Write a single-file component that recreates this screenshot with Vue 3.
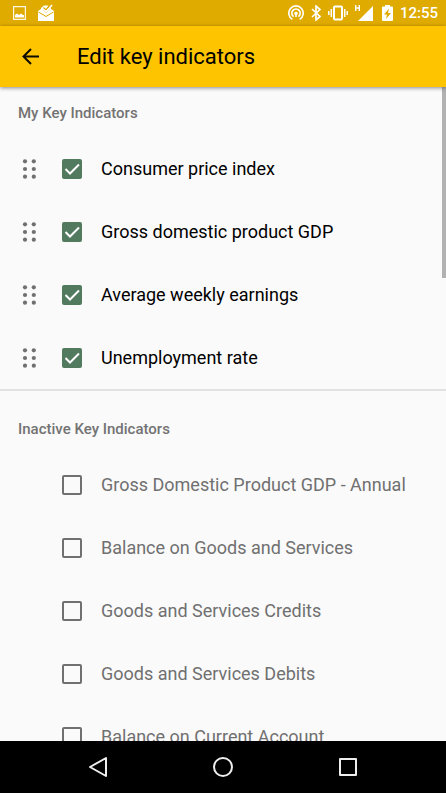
<script setup>
import { ref } from 'vue'

const active = ref([
  { id: 'cpi', name: 'Consumer price index', on: true },
  { id: 'gdp', name: 'Gross domestic product GDP', on: true },
  { id: 'awe', name: 'Average weekly earnings', on: true },
  { id: 'unemployment', name: 'Unemployment rate', on: true },
])

const inactive = ref([
  { id: 'gdp-annual', name: 'Gross Domestic Product GDP - Annual', on: false },
  { id: 'balance-gs', name: 'Balance on Goods and Services', on: false },
  { id: 'credits', name: 'Goods and Services Credits', on: false },
  { id: 'debits', name: 'Goods and Services Debits', on: false },
  { id: 'balance-ca', name: 'Balance on Current Account', on: false },
])
</script>

<template>
  <div class="screen">
    <div class="status">
      <div class="group notices">
        <svg width="14" height="16" viewBox="0 0 14 16">
          <path fill="#fff8e0" fill-rule="evenodd" d="M0 1h13v14H0zM1.200 2.200v11.600h10.600V2.200z" />
          <path fill="#fff" d="M2 12.500V10l2-1.500 2 1.500 2-1.500 2 1.500h1v2.500z" />
        </svg>
        <svg width="18" height="18" viewBox="0 0 18 18">
          <path fill="#fff" d="M1 7l3-2v3.500l5 3 5-3V5l3 2v10H1z" />
          <path fill="#fff" d="M4 4l3-2.500h4.500L9 5 7.500 3.500 5.500 5.500 9 9l5-5.500V9l-5 3-5-3z" />
          <path fill="none" stroke="#fff" stroke-width="1.800" d="M5.500 4.500L9 7.500l6-6.500" />
          <path fill="none" stroke="#e0ab00" stroke-width="1" d="M6 3.500L9 6l4-4.500M1.500 8L9 12.500 16.500 8" />
        </svg>
      </div>
      <div class="group system">
        <svg width="16" height="16" viewBox="0 0 16 16" fill="none" stroke="#fff" stroke-width="1.600">
          <path d="M4.300 14.300a7.200 7.200 0 1 1 7.400 0" />
          <path d="M5.600 11.600a4.200 4.200 0 1 1 4.800 0" />
          <circle cx="8" cy="8.500" r="1.800" fill="#fff" stroke="none" />
          <path d="M8 9v3" />
        </svg>
        <svg width="10" height="16" viewBox="0 0 10 16" fill="none" stroke="#fff" stroke-width="1.700">
          <path d="M1 4l8 7.500L5 15V1l4 3.500L1 12" />
        </svg>
        <svg width="20" height="16" viewBox="0 0 20 16" fill="none" stroke="#fff">
          <rect x="6" y="1.500" width="8" height="13" rx="1" stroke-width="2" />
          <path stroke-width="1.500" d="M3.300 4v8M.8 6v4M16.700 4v8M19.200 6v4" />
        </svg>
        <svg width="20" height="16" viewBox="0 0 20 16">
          <path fill="#fff" d="M18 1v15H3z" />
          <path fill="none" stroke="#fff" stroke-width="1.400" d="M.7 0v6M4.300 0v6M.7 3h3.600" />
        </svg>
        <svg width="11" height="16" viewBox="0 0 11 16">
          <path fill="#fff" d="M3 1.500V0h5v1.500h2q1 0 1 1V15q0 1-1 1H1q-1 0-1-1V2.500q0-1 1-1z" />
          <path fill="#e0ab00" d="M7 3.500L2 9.500h3L4 14l5-6H6z" />
        </svg>
        <span class="clock">12:55</span>
      </div>
    </div>

    <header class="bar">
      <button class="back" type="button" aria-label="Back">
        <svg width="17" height="18" viewBox="0 0 17 18" fill="none" stroke="#0d0a00" stroke-width="2">
          <path d="M9 1L1.500 8.500 9 16M1.500 8.500H17" />
        </svg>
      </button>
      <h1>Edit key indicators</h1>
    </header>

    <main class="body">
      <div class="list">
        <section class="mine">
          <h2>My Key Indicators</h2>
          <label v-for="item in active" :key="item.id" class="row">
            <svg class="grip" width="14" height="20" viewBox="0 0 14 20" fill="#707070">
              <circle cx="3" cy="2.300" r="2.100" /><circle cx="11.800" cy="2.300" r="2.100" />
              <circle cx="3" cy="10" r="2.100" /><circle cx="11.800" cy="10" r="2.100" />
              <circle cx="3" cy="17.700" r="2.100" /><circle cx="11.800" cy="17.700" r="2.100" />
            </svg>
            <span class="box">
              <input v-model="item.on" type="checkbox" />
              <svg viewBox="0 0 20 20"><path d="M3.500 10L8 14.500 17 5.500" /></svg>
            </span>
            <span>{{ item.name }}</span>
          </label>
        </section>
        <section class="others">
          <h2>Inactive Key Indicators</h2>
          <label v-for="item in inactive" :key="item.id" class="row">
            <span class="grip"></span>
            <span class="box">
              <input v-model="item.on" type="checkbox" />
              <svg viewBox="0 0 20 20"><path d="M3.500 10L8 14.500 17 5.500" /></svg>
            </span>
            <span>{{ item.name }}</span>
          </label>
        </section>
      </div>
      <div class="thumb"></div>
    </main>

    <nav class="keys">
      <button type="button" aria-label="Back">
        <svg width="22" height="22" viewBox="0 0 22 22"><path d="M19 2v18L3 11z" /></svg>
      </button>
      <button type="button" aria-label="Home">
        <svg width="22" height="22" viewBox="0 0 22 22"><circle cx="11" cy="11" r="9" /></svg>
      </button>
      <button type="button" aria-label="Overview">
        <svg width="22" height="22" viewBox="0 0 22 22"><rect x="3" y="3" width="16" height="16" /></svg>
      </button>
    </nav>
  </div>
</template>

<style>
body {
  background: #fafafa;
}
</style>

<style scoped>
.screen {
  display: flex;
  flex-direction: column;
  height: 100vh;
  background: #fafafa;
  color: #000;
  font-family: Roboto, "Liberation Sans", sans-serif;
}
.status {
  display: flex;
  flex: none;
  align-items: center;
  justify-content: space-between;
  height: 26px;
  padding: 0 8px 0 13px;
  background: #e0ab00;
}
.group {
  display: flex;
  align-items: center;
  gap: 7px;
}
.notices {
  gap: 10px;
}
svg {
  display: block;
  flex: none;
}
.clock {
  color: #fff;
  font-size: 15px;
  font-weight: 500;
  line-height: 26px;
}
.bar {
  position: relative;
  z-index: 1;
  display: flex;
  flex: none;
  align-items: center;
  gap: 38px;
  height: 61px;
  padding: 0 22px;
  background: #ffc400;
  box-shadow: 0 1px 4px rgba(0, 0, 0, 0.45);
}
button {
  padding: 0;
  border: 0;
  background: none;
}
h1 {
  margin: 0;
  font-size: 22px;
  font-weight: 400;
  line-height: 28px;
}
.body {
  position: relative;
  flex: 1;
  min-height: 0;
}
.list {
  height: 100%;
  overflow-y: auto;
  scrollbar-width: none;
}
.thumb {
  position: absolute;
  top: 0;
  right: 0;
  width: 4px;
  height: 191px;
  background: #b2b2b2;
}
h2 {
  margin: 0;
  padding: 16px 18px 14px;
  color: #737373;
  font-size: 15px;
  font-weight: 500;
  line-height: 20px;
}
.mine {
  border-bottom: 2px solid #e2e2e2;
}
.others h2 {
  padding-top: 28px;
}
.row {
  display: flex;
  align-items: center;
  height: 63px;
  padding: 0 22px;
  font-size: 18px;
  line-height: 24px;
}
.others .row {
  color: #707070;
}
.grip {
  flex: none;
  width: 14px;
  margin-right: 26px;
}
.box {
  display: grid;
  flex: none;
  width: 20px;
  height: 20px;
  margin-right: 19px;
}
.box > * {
  grid-area: 1 / 1;
}
.box input {
  box-sizing: border-box;
  width: 20px;
  height: 20px;
  margin: 0;
  border: 2px solid #707070;
  border-radius: 2px;
  appearance: none;
}
.box input:checked {
  border-color: #527a5f;
  background: #527a5f;
}
.box svg {
  width: 20px;
  height: 20px;
  fill: none;
  stroke: #fff;
  stroke-width: 2;
  pointer-events: none;
  visibility: hidden;
}
.box input:checked + svg {
  visibility: visible;
}
.keys {
  display: flex;
  flex: none;
  align-items: center;
  justify-content: center;
  height: 52px;
  background: #000;
}
.keys button {
  display: grid;
  flex: 0 1 28%;
  place-items: center;
  height: 52px;
}
.keys svg {
  fill: none;
  stroke: #eee;
  stroke-width: 2;
  stroke-linejoin: round;
}
</style>
